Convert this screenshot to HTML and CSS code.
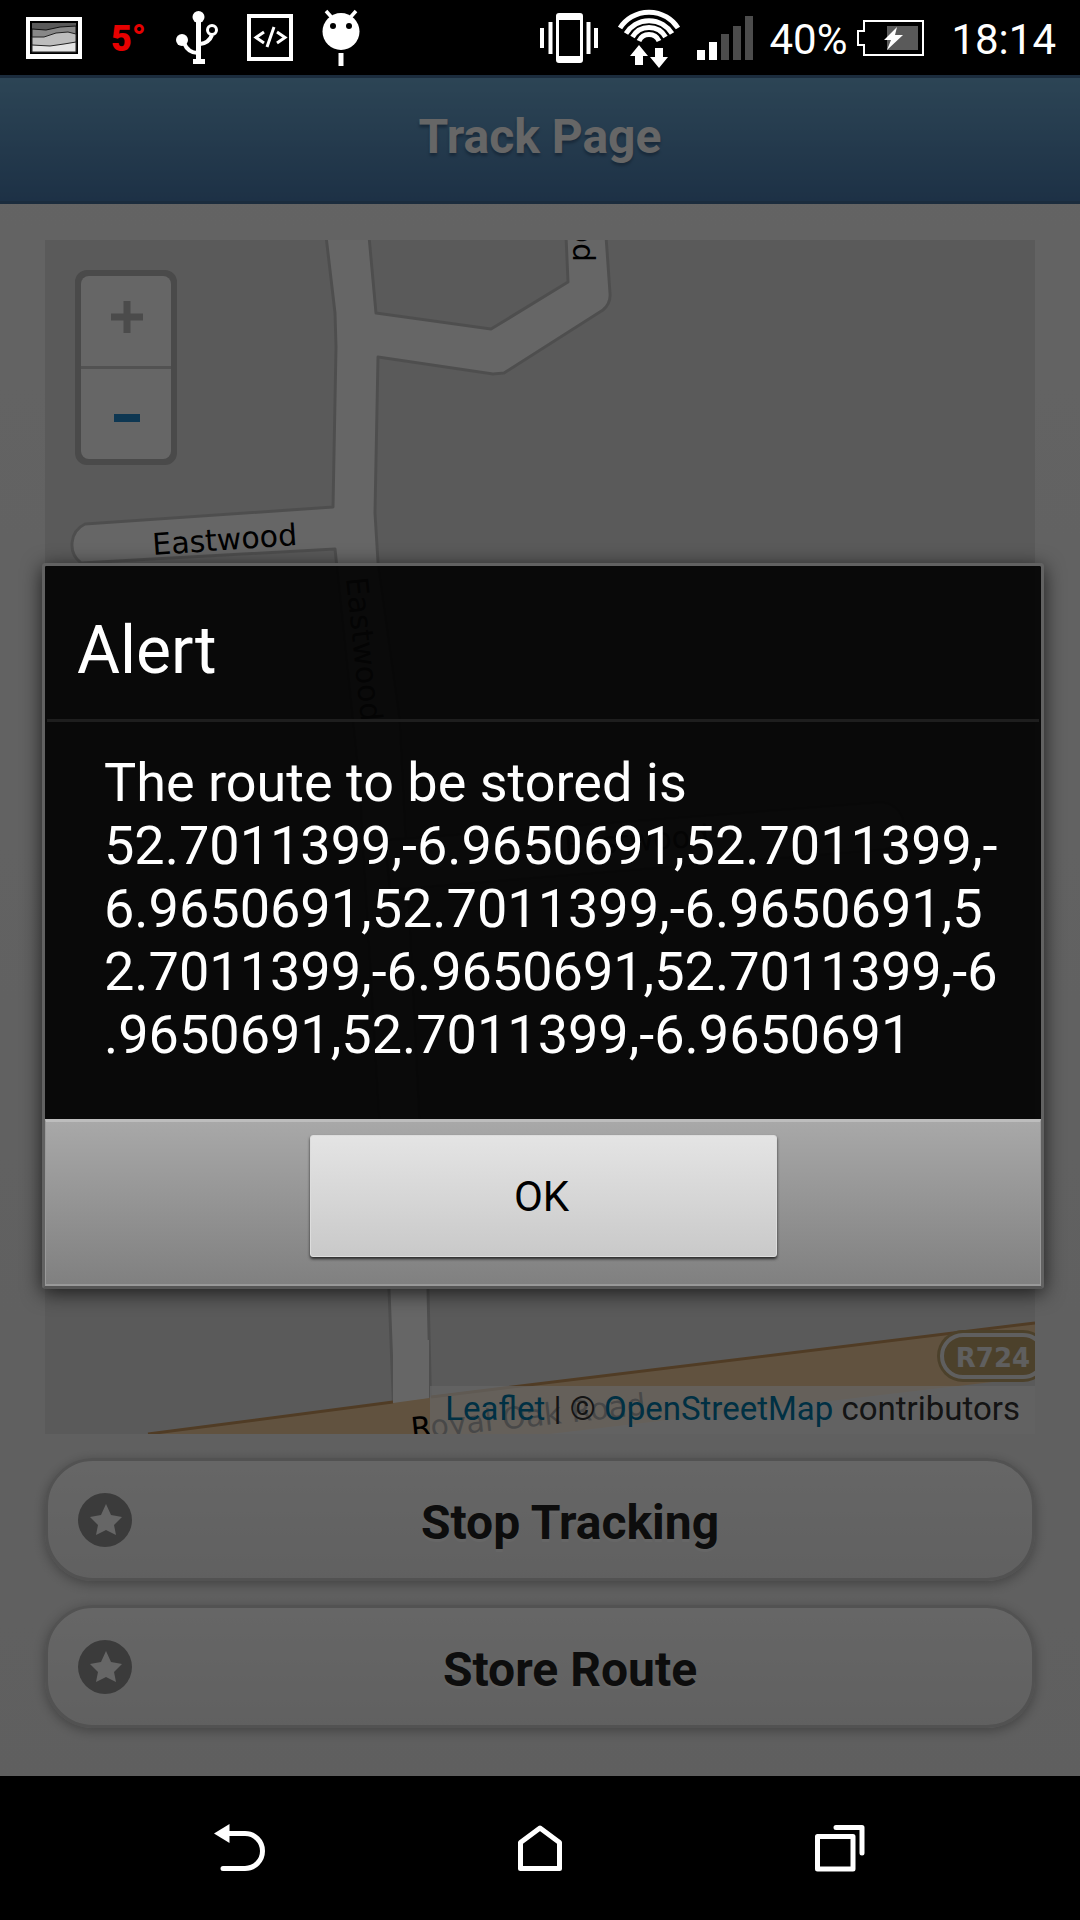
FILE: index.html
```html
<!DOCTYPE html>
<html lang="en">
<head>
<meta charset="utf-8">
<meta name="viewport" content="width=device-width, initial-scale=1">
<title>Track Page</title>
<link rel="stylesheet" href="styles.css">
</head>
<body>
<div class="status-bar">
  <div class="status-group status-left">
    <svg width="56" height="42" viewBox="0 0 56 42"><rect width="56" height="42" fill="#fff"/><rect x="4" y="4" width="48" height="33" fill="#000"/><rect x="6" y="6" width="44" height="29" fill="#5a5a5a"/><path d="M6 12 L20 13 L34 10 L50 9 V35 H6Z" fill="#888" stroke="#111"/><path d="M6 20 L18 20 L30 16 L42 15 L50 17 V35 H6Z" fill="#bdbdbd" stroke="#222"/><path d="M6 28 L24 29 L38 27 L50 25 V35 H6Z" fill="#e4e4e4" stroke="#222"/></svg>
    <span class="temperature">5°</span>
    <svg width="42" height="54" viewBox="0 0 42 54" fill="#fff"><path d="M20 4h5v44h4v5H17v-5h3z"/><circle cx="22.500" cy="6" r="6"/><circle cx="6" cy="29" r="6"/><circle cx="36" cy="19" r="4.500" fill="none" stroke="#fff" stroke-width="3"/><path d="M8 32Q12 42 22 42M36 24Q33 32 24 33" fill="none" stroke="#fff" stroke-width="4"/></svg>
    <svg width="46" height="47" viewBox="0 0 46 47" fill="none" stroke="#fff"><rect x="2" y="2" width="42" height="43" stroke-width="4"/><path d="M17 18L9 23.500L17 29M27 13L20 33M30 18L38 23.500L30 29" stroke-width="3"/></svg>
    <svg width="38" height="58" viewBox="0 0 38 58" fill="#fff"><path d="M4 2L12 11M34 2L26 11" stroke="#fff" stroke-width="3.500"/><circle cx="19" cy="22.500" r="18.500"/><circle cx="11" cy="17" r="3" fill="#000"/><circle cx="27" cy="17" r="3" fill="#000"/><path d="M16.500 44h5v13h-5z"/></svg>
  </div>
  <div class="status-group status-right">
    <svg width="62" height="50" viewBox="0 0 62 50" fill="#fff"><path fill-rule="evenodd" d="M19 0h21q3 0 3 3v44q0 3-3 3H19q-3 0-3-3V3q0-3 3-3zM19 7v36h21V7z"/><path d="M0 15h4v20H0zM8.500 9h4v32h-4zM46.500 9h4v32h-4zM54 15h4v20h-4z"/></svg>
    <svg width="63" height="60" viewBox="0 0 63 60"><g fill="none" stroke="#fff" stroke-width="5"><path d="M2 20A34.500 34.500 0 0 1 60 20"/><path d="M8 25.500A27 27 0 0 1 54 25.500"/><path d="M14.500 29A19 19 0 0 1 47.500 29"/><path d="M21 33A11 11 0 0 1 41 33"/></g><path fill="#fff" d="M21 37l9 11h-5v9h-8v-9h-5zM37 40h8v9h5l-9 11-9-11h5z"/></svg>
    <svg width="56" height="44" viewBox="0 0 56 44"><path fill="#fff" d="M0 34h8v10H0zM12 26h8v18h-8z"/><path fill="#4c4c4c" d="M24 18h8v26h-8zM36 10h8v34h-8zM48 0h8v44h-8z"/></svg>
    <span class="battery"><span class="status-text">40%</span>
      <svg width="68" height="36" viewBox="0 0 68 36"><path d="M7 1H66V35H7V25H1V11H7Z" fill="none" stroke="#fff" stroke-width="2"/><path fill="#5a5a5a" d="M30 6h31v24H30z"/><path fill="#fff" d="M40 7L27 20h7l-4 10 16-15h-8z"/></svg>
    </span>
    <time class="clock status-text">18:14</time>
  </div>
</div>

<main class="app-view">
  <header class="page-header"><h1>Track Page</h1></header>
  <div class="page-content">
    <div class="map">
      <svg class="map-tiles" viewBox="0 0 990 1194" preserveAspectRatio="xMidYMid slice">
        <g fill="#fff" stroke="#c4c4c4" stroke-width="3" stroke-linejoin="round">
          <path d="M281 -4L290 73L291 107L288 267L40 284A23 23 0 0 0 36 323L290 309L314 540L344 1050L349 1180H386L383 1050L355 480L333 322L330 273L333 117L448 134L459 133L558 70Q566 63 565 53L561 -4H521L523 42L446 89L331 73L324 -4Z"/>
          <path d="M340 600L835 562A24 24 0 0 1 835 610L345 650Z"/>
        </g>
        <path d="M103 1194L348 1162L505 1143L990 1083V1137L505 1194Z" fill="#f3ce9f"/>
        <path d="M103 1194L348 1162M386 1157L990 1083" fill="none" stroke="#c8965e" stroke-width="3"/>
        <path d="M348 1100H384V1158L348 1163Z" fill="#fff"/>
        <circle cx="495" cy="600" r="8" fill="#b33"/>
        <g class="road-name">
          <text transform="translate(108 315) rotate(-4)">Eastwood</text>
          <text transform="translate(301 338) rotate(84)">Eastwood</text>
          <text transform="translate(520 616) rotate(-4)">Eastwood</text>
          <text transform="translate(528 22) rotate(90)" text-anchor="end">Eastwood</text>
          <text transform="translate(367 1199) rotate(-6)">Royal Oak Road</text>
        </g>
        <rect x="892" y="1090" width="112" height="52" rx="26" fill="#bfa26c"/>
        <rect x="897" y="1095" width="102" height="42" rx="21" fill="none" stroke="#eee" stroke-width="4"/>
        <text class="road-shield" x="948" y="1127" text-anchor="middle">R724</text>
      </svg>
      <div class="zoom-control">
        <button type="button" class="zoom-in" disabled aria-label="Zoom in"><svg width="32" height="32" viewBox="0 0 32 32"><path d="M0 16H32M16 0V32" stroke="#bbb" stroke-width="7"/></svg></button>
        <button type="button" class="zoom-out" aria-label="Zoom out"><svg width="32" height="32" viewBox="0 0 32 32"><path d="M3 16H29" stroke="#2489ce" stroke-width="8"/></svg></button>
      </div>
      <div class="attribution"><a href="#leaflet">Leaflet</a> | © <a href="#osm">OpenStreetMap</a> contributors</div>
    </div>
    <button type="button" class="action"><svg width="54" height="54" viewBox="0 0 54 54"><circle cx="27" cy="27" r="27" fill="#949494"/><path d="M28 11L33 22L44 24L36 32L38 42L28 37L18 42L20 32L12 24L23 22Z" fill="#fff"/></svg><span>Stop Tracking</span></button>
    <button type="button" class="action"><svg width="54" height="54" viewBox="0 0 54 54"><circle cx="27" cy="27" r="27" fill="#949494"/><path d="M28 11L33 22L44 24L36 32L38 42L28 37L18 42L20 32L12 24L23 22Z" fill="#fff"/></svg><span>Store Route</span></button>
  </div>

  <div class="scrim">
    <section class="dialog" role="alertdialog" aria-labelledby="alert-title" aria-describedby="alert-text">
      <h2 id="alert-title">Alert</h2>
      <p id="alert-text">The route to be stored is<br>52.7011399,-6.9650691,52.7011399,-<br>6.9650691,52.7011399,-6.9650691,5<br>2.7011399,-6.9650691,52.7011399,-6<br>.9650691,52.7011399,-6.9650691</p>
      <footer><button type="button" class="ok">OK</button></footer>
    </section>
  </div>
</main>

<nav class="nav-bar">
  <button type="button" aria-label="Back"><svg width="52" height="48" viewBox="0 0 52 48"><path fill="#fff" d="M0 9.500L15.500 0V19Z"/><path d="M14 9.500H31A17.500 17.500 0 0 1 31 44.500H9" fill="none" stroke="#fff" stroke-width="5" stroke-linecap="round"/></svg></button>
  <button type="button" aria-label="Home"><svg width="44" height="46" viewBox="0 0 44 46"><path d="M2.500 17.500V43.500H41.500V17.500L22 3Z" fill="none" stroke="#fff" stroke-width="5" stroke-linejoin="round"/></svg></button>
  <button type="button" aria-label="Recent apps"><svg width="50" height="47" viewBox="0 0 50 47"><path d="M2.500 11.500H38V44H2.500ZM21 2.500H47V28" fill="none" stroke="#fff" stroke-width="5" stroke-linejoin="round" stroke-linecap="round"/></svg></button>
</nav>
</body>
</html>
```

FILE: styles.css
```css
* { box-sizing: border-box; }

body {
  margin: 0;
  min-height: 100vh;
  display: flex;
  flex-direction: column;
  background: #000;
  font-family: Roboto, "Liberation Sans", sans-serif;
}

svg { display: block; flex: none; }
button { font-family: inherit; margin: 0; }

/* Status bar */
.status-bar {
  height: 75px;
  display: flex;
  justify-content: space-between;
  align-items: center;
  padding: 0 24px 0 26px;
  color: #fff;
  font-size: 42px;
}
.status-group { display: flex; align-items: center; }
.status-left { gap: 29px; }
.status-right { gap: 16px; }
.status-text { padding-top: 3px; }
.temperature {
  width: 36px;
  padding-top: 3px;
  color: #e60000;
  font-size: 36px;
  font-weight: 900;
}
.battery { display: flex; align-items: center; gap: 10px; }
.clock { margin-left: 10px; }

/* Page */
.app-view {
  flex: 1;
  position: relative;
  display: flex;
  flex-direction: column;
  background: linear-gradient(#f9f9f9, #eee);
}
.page-header {
  height: 129px;
  display: flex;
  align-items: center;
  justify-content: center;
  padding-bottom: 6px;
  border: solid #456f9a;
  border-width: 3px 0;
  background: linear-gradient(#6facd5, #497bae);
}
.page-header h1 {
  margin: 0;
  color: #fff;
  font-size: 48px;
  line-height: 60px;
  text-shadow: 0 3px 3px #3e6790;
}
.page-content {
  flex: 1;
  display: flex;
  flex-direction: column;
  gap: 24px;
  padding: 36px 45px 48px;
}

/* Map */
.map {
  flex: 1;
  min-height: 600px;
  position: relative;
  overflow: hidden;
  background: #e1e1e1;
}
.map-tiles { position: absolute; inset: 0; width: 100%; height: 100%; }
.road-name {
  font: 30px "DejaVu Sans", sans-serif;
  fill: #000;
}
.road-shield { font: bold 26px "DejaVu Sans", sans-serif; fill: #eee; }
.zoom-control {
  position: absolute;
  top: 30px;
  left: 30px;
  width: 102px;
  display: flex;
  flex-direction: column;
  border: 6px solid #b8b8b8;
  border-radius: 12px;
  background: #b8b8b8;
}
.zoom-control button {
  height: 90px;
  display: grid;
  place-items: center;
  border: 0;
  background: #fff;
}
.zoom-control .zoom-in {
  height: 93px;
  padding: 0 0 8px 2px;
  border-bottom: 3px solid #ccc;
  border-radius: 8px 8px 0 0;
}
.zoom-control .zoom-out {
  padding: 8px 0 0 2px;
  border-radius: 0 0 8px 8px;
}
.attribution {
  position: absolute;
  right: 0;
  bottom: 0;
  padding: 0 15px 3px;
  background: rgba(255, 255, 255, .7);
  color: #333;
  font-size: 33px;
  line-height: 45px;
  white-space: nowrap;
}
.attribution a { color: #0078a8; text-decoration: none; }

/* Page buttons */
.action {
  height: 123px;
  display: flex;
  align-items: center;
  padding: 0 24px 0 30px;
  border: 3px solid #ccc;
  border-radius: 48px;
  background: linear-gradient(#fff, #f1f1f1);
  box-shadow: 0 3px 12px rgba(0, 0, 0, .3);
  color: #222;
  font-size: 48px;
  font-weight: bold;
  text-shadow: 0 3px 0 #fff;
}
.action span { flex: 1; padding-top: 6px; text-align: center; }

/* Dialog */
.scrim {
  position: absolute;
  inset: 0;
  display: grid;
  align-items: center;
  padding: 0 36px 0 42px;
  background: rgba(0, 0, 0, .6);
}
.dialog {
  border: 3px solid #626262;
  border-bottom-color: #555;
  border-radius: 4px;
  background: rgba(4, 4, 4, .94);
  box-shadow: 0 4px 20px rgba(0, 0, 0, .7);
  background-clip: padding-box;
  color: #fff;
}
.dialog h2 {
  margin: 0 2px;
  padding: 43px 30px 26px;
  border-bottom: 3px solid #1e1e1e;
  font-size: 66px;
  font-weight: 400;
  line-height: 84px;
}
.dialog p {
  margin: 0;
  padding: 29px 24px 53px 59px;
  font-size: 54px;
  line-height: 63px;
  overflow-wrap: anywhere;
}
.dialog footer {
  display: flex;
  justify-content: center;
  padding: 13px 0 27px;
  border: 2px solid #999;
  border-width: 3px 1px 2px;
  border-top-color: #bdbdbd;
  background: linear-gradient(#a8a8a8, #9c9c9c 30%, #808080);
}
.ok {
  width: 467px;
  height: 122px;
  padding: 2px 3px 0 0;
  border: 1px solid #ddd;
  border-radius: 3px;
  background: linear-gradient(#e4e4e4, #c9c9c9);
  box-shadow: 0 2px 3px rgba(0, 0, 0, .7);
  color: #000;
  font-size: 42px;
}

/* System navigation */
.nav-bar {
  height: 144px;
  display: grid;
  grid-template-columns: repeat(3, 1fr);
  padding: 0 90px;
}
.nav-bar button {
  display: grid;
  place-items: center;
  padding: 0;
  border: 0;
  background: none;
}
```
